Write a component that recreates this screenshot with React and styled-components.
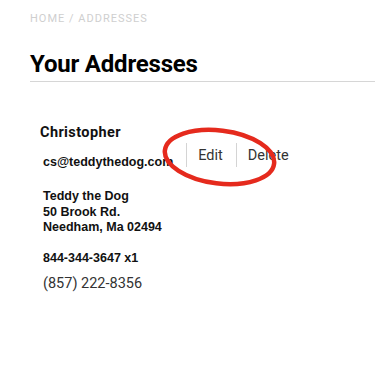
import React from 'react';
import styled, { createGlobalStyle } from 'styled-components';

const GlobalStyle = createGlobalStyle`
  body {
    margin: 0;
    background: #fff;
    font-family: Roboto, "Liberation Sans", sans-serif;
  }
`;

const Page = styled.div`
  padding: 12px 0 40px 30px;
`;

const Breadcrumb = styled.div`
  font-size: 11px;
  line-height: 13px;
  letter-spacing: 1px;
  color: #cfcfcf;
  text-transform: uppercase;
`;

const Title = styled.h1`
  margin: 25px 0 0;
  padding-bottom: 3px;
  font-size: 24px;
  line-height: 28px;
  font-weight: 700;
  letter-spacing: -0.2px;
  color: #000;
  border-bottom: 1px solid #d6d6d6;
`;

const Card = styled.div`
  position: relative;
  margin-top: 43px;
`;

const Header = styled.div`
  display: flex;
  align-items: flex-end;
`;

const Who = styled.div`
  display: flex;
  flex-direction: column;
`;

const Name = styled.div`
  padding-left: 10px;
  font-size: 14.5px;
  line-height: 16px;
  font-weight: 700;
  letter-spacing: 0.4px;
  color: #111;
`;

const Detail = styled.div`
  padding-left: 13px;
  margin-top: ${(p) => p.$gap || 0}px;
  font-family: "Liberation Sans", Arial, sans-serif;
  font-size: 12.5px;
  line-height: 15.3px;
  font-weight: 700;
  color: #111;
`;

const Actions = styled.div`
  display: flex;
  margin: 0 0 3px 13px;
`;

const Action = styled.a`
  display: flex;
  align-items: center;
  height: 24px;
  padding: 0 13px 0 11px;
  border-left: 1px solid #d4d4d4;
  font-size: 14.5px;
  color: #333;
  text-decoration: none;
  cursor: pointer;
`;

const Phone = styled.div`
  padding-left: 13px;
  margin-top: 9px;
  font-size: 14.5px;
  line-height: 17px;
  color: #333;
`;

const Circle = styled.svg`
  position: absolute;
  left: 128px;
  top: 1px;
  pointer-events: none;
`;

const App = () => {
  return (
    <Page>
      <GlobalStyle />
      <Breadcrumb>Home / Addresses</Breadcrumb>
      <Title>Your Addresses</Title>
      <Card>
        <Header>
          <Who>
            <Name>Christopher</Name>
            <Detail $gap={14}>cs@teddythedog.com</Detail>
          </Who>
          <Actions>
            <Action>Edit</Action>
            <Action>Delete</Action>
          </Actions>
        </Header>
        <Detail $gap={19}>
          Teddy the Dog
          <br />
          50 Brook Rd.
          <br />
          Needham, Ma 02494
        </Detail>
        <Detail $gap={16}>844-344-3647 x1</Detail>
        <Phone>(857) 222-8356</Phone>
        <Circle width="124" height="64" viewBox="0 0 124 64">
          <ellipse
            cx="61.5"
            cy="31"
            rx="55"
            ry="26.5"
            transform="rotate(7 61.5 31)"
            fill="none"
            stroke="#e52a1d"
            strokeWidth="4.5"
          />
        </Circle>
      </Card>
    </Page>
  );
};

export default App;
